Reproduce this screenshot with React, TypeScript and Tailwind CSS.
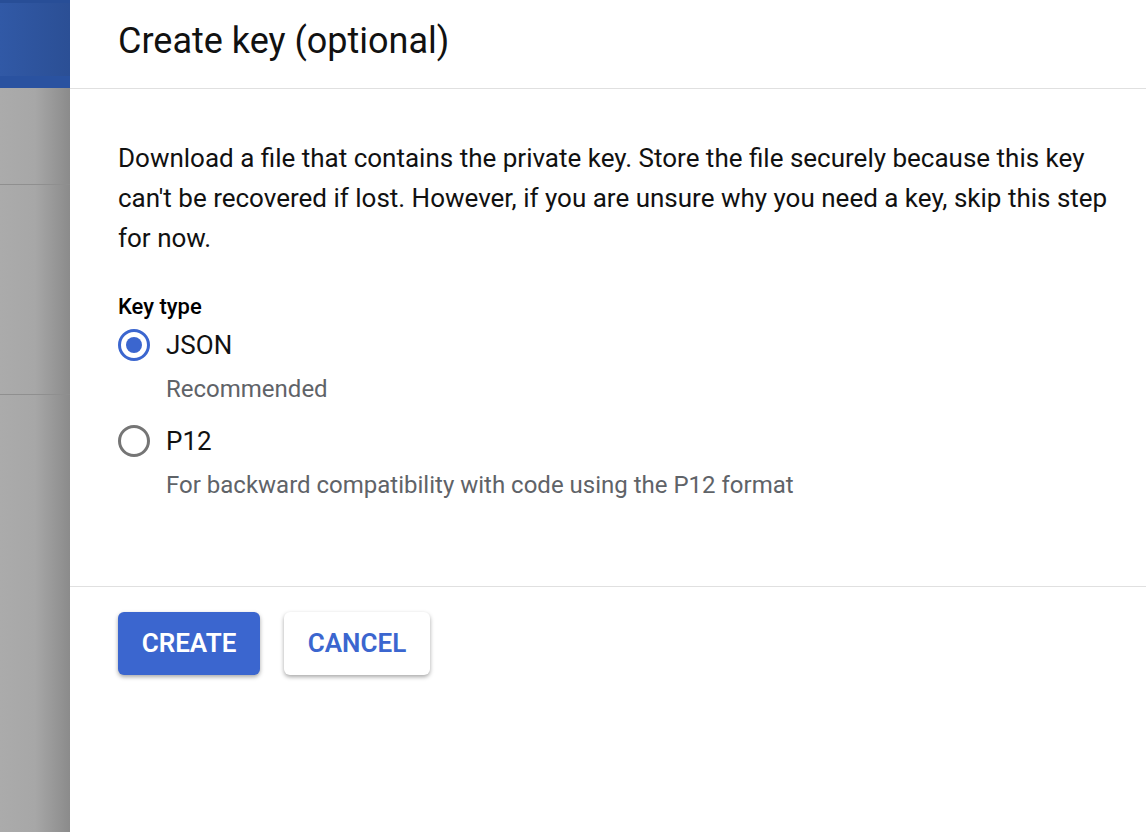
import React, { useState } from 'react';

const KEY_TYPES = [
  { id: 'json', label: 'JSON', hint: 'Recommended' },
  { id: 'p12', label: 'P12', hint: 'For backward compatibility with code using the P12 format' },
];

const Radio: React.FC<{ checked: boolean }> = ({ checked }) => (
  <span
    className={`flex h-[32px] w-[32px] shrink-0 items-center justify-center rounded-full border-[3px] ${
      checked ? 'border-[#3b66cf]' : 'border-[#757575]'
    }`}
  >
    {checked && <span className="h-[16px] w-[16px] rounded-full bg-[#3b66cf]" />}
  </span>
);

export default function App() {
  const [keyType, setKeyType] = useState('json');

  return (
    <div className="flex h-[832px] w-[1146px] overflow-hidden font-['Roboto',sans-serif]">
      {/* dimmed page behind the side panel */}
      <div className="flex w-[70px] shrink-0 flex-col bg-gradient-to-r from-[#ababab] via-[#a7a7a7] to-[#8b8b8b]">
        <div className="h-[88px] border-t-[3px] border-b-[12px] border-t-[#284e97] border-b-[#2a52a0] bg-gradient-to-r from-[#3159a6] to-[#2b4f95]" />
        <div className="h-[97px] border-b border-[#8f8f8f]" />
        <div className="h-[210px] border-b border-[#8f8f8f]" />
      </div>

      <div className="flex flex-1 flex-col bg-white">
        <div className="flex h-[89px] items-center border-b border-[#e0e0e0] pl-[48px] pb-[6px]">
          <h1 className="text-[36px] leading-[44px] text-[#111]">Create key (optional)</h1>
        </div>

        <div className="pl-[48px] pr-[24px]">
          <p className="mt-[49px] text-[26px] leading-[40px] text-[#111]">
            Download a file that contains the private key. Store the file securely because this key
            can't be recovered if lost. However, if you are unsure why you need a key, skip this step
            for now.
          </p>

          <div className="mt-[35px] text-[22px] font-medium leading-[28px] text-black">Key type</div>

          {KEY_TYPES.map((t, i) => (
            <div key={t.id} className={i === 0 ? 'mt-[4px]' : 'mt-[16px]'}>
              <button
                type="button"
                onClick={() => setKeyType(t.id)}
                className="flex h-[40px] items-center gap-[16px]"
              >
                <Radio checked={keyType === t.id} />
                <span className="text-[26px] leading-[40px] text-[#111]">{t.label}</span>
              </button>
              <div className="mt-[8px] pl-[48px] text-[24px] leading-[32px] text-[#5f6368]">{t.hint}</div>
            </div>
          ))}
        </div>

        <div className="mt-[85px] flex gap-[24px] border-t border-[#e0e0e0] pl-[48px] pt-[25px]">
          <button className="flex h-[63px] w-[142px] items-center justify-center rounded-[6px] bg-[#3b66cf] text-[26px] font-semibold text-white shadow-[0_2px_4px_rgba(0,0,0,0.35)]">
            CREATE
          </button>
          <button className="flex h-[63px] w-[146px] items-center justify-center rounded-[6px] bg-white text-[26px] font-semibold text-[#3b66cf] shadow-[0_2px_4px_rgba(0,0,0,0.35)]">
            CANCEL
          </button>
        </div>
      </div>
    </div>
  );
}
